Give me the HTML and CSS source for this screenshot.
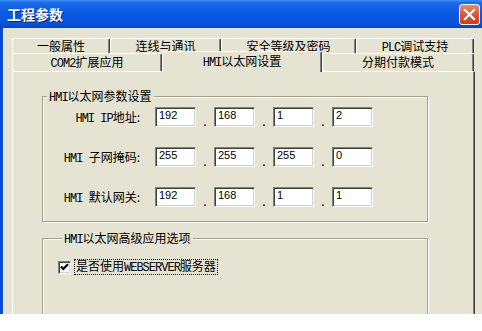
FILE: index.html
```html
<!DOCTYPE html>
<html lang="zh-CN">
<head>
  <meta charset="UTF-8">
  <title>工程参数</title>
  <link rel="stylesheet" href="styles.css">
</head>
<body>
  <div class="window">
    <div class="titlebar">
      <span class="title">工程参数</span>
      <span class="close">
        <svg width="19" height="19" viewBox="0 0 19 19"><path d="M5 5 L14 14 M14 5 L5 14" stroke="#fff" stroke-width="2.2" stroke-linecap="square"/></svg>
      </span>
    </div>
    <div class="frame">
      <div class="tabs">
        <div class="tabrow back">
          <div class="tab t1">一般属性</div>
          <div class="tab t2">连线与通讯</div>
          <div class="tab t3">安全等级及密码</div>
          <div class="tab t4"><span class="en">PLC</span>调试支持</div>
        </div>
        <div class="tabrow front">
          <div class="tab t5"><span class="en">COM2</span>扩展应用</div>
          <div class="tab t6 on"><span class="en">HMI</span>以太网设置</div>
          <div class="tab t7">分期付款模式</div>
        </div>
      </div>
      <div class="panel">
        <fieldset class="group net">
          <legend><span class="en">HMI</span>以太网参数设置</legend>
          <div class="row">
            <label class="lbl"><span class="en">HMI IP</span>地址:</label>
            <div class="ip">
              <input type="text" value="192"><span class="dot">.</span>
              <input type="text" value="168"><span class="dot">.</span>
              <input type="text" value="1"><span class="dot">.</span>
              <input type="text" value="2">
            </div>
          </div>
          <div class="row">
            <label class="lbl"><span class="en">HMI </span>子网掩码:</label>
            <div class="ip">
              <input type="text" value="255"><span class="dot">.</span>
              <input type="text" value="255"><span class="dot">.</span>
              <input type="text" value="255"><span class="dot">.</span>
              <input type="text" value="0">
            </div>
          </div>
          <div class="row">
            <label class="lbl"><span class="en">HMI </span>默认网关:</label>
            <div class="ip">
              <input type="text" value="192"><span class="dot">.</span>
              <input type="text" value="168"><span class="dot">.</span>
              <input type="text" value="1"><span class="dot">.</span>
              <input type="text" value="1">
            </div>
          </div>
        </fieldset>
        <fieldset class="group adv">
          <legend><span class="en">HMI</span>以太网高级应用选项</legend>
          <div class="check">
            <span class="box">
              <svg width="11" height="11" viewBox="0 0 11 11"><path d="M2 4.5 L4.3 7 L9 2.2" stroke="#000" stroke-width="2.2" fill="none"/></svg>
            </span>
            <span class="cap">是否使用<span class="en">WEBSERVER</span>服务器</span>
          </div>
        </fieldset>
      </div>
    </div>
  </div>
</body>
</html>
```

FILE: styles.css
```css
body {
  margin: 0;
  background: #fff;
  font-family: "Noto Sans CJK SC", sans-serif;
  font-size: 12px;
  color: #000;
}
.en {
  font-family: "Liberation Mono", monospace;
  letter-spacing: -1px;
  line-height: 1;
}
.window {
  width: 482px;
  height: 314px;
  overflow: hidden;
  background: #e5e4d3;
}
.titlebar {
  height: 28px;
  box-sizing: border-box;
  display: flex;
  align-items: center;
  justify-content: space-between;
  padding: 0 2px 0 7px;
  background: linear-gradient(#3d8ef6 0, #1a68ea 3px, #0a5ae4 45%, #0852dc 85%, #0744c6 100%);
}
.title {
  color: #fff;
  font-weight: bold;
  font-size: 14px;
  line-height: 16px;
  text-shadow: 1px 1px #0a2a8a;
}
.close {
  width: 21px;
  height: 21px;
  box-sizing: border-box;
  border: 1px solid #fff;
  border-radius: 3px;
  background: linear-gradient(#ec8a6a, #da5330 55%, #c8401e);
  display: flex;
}
.frame {
  height: 286px;
  box-sizing: border-box;
  border-left: 3px solid #0b4bd8;
  box-shadow: inset 1px 0 #f5f4ec;
  padding: 10px 0 0 9px;
}
.tabs {
  width: 463px;
}
.tabrow {
  display: flex;
}
.tabrow.back {
  height: 15px;
}
.tabrow.front {
  height: 18px;
}
.tab {
  box-sizing: border-box;
  text-align: center;
  white-space: nowrap;
  border-top: 1px solid #fff;
  border-left: 1px solid #fff;
  border-right: 1px solid #404040;
  box-shadow: inset -1px 0 #808080;
  border-radius: 2px 2px 0 0;
  background: #e5e4d3;
}
.back .tab {
  height: 15px;
  line-height: 13px;
}
.front .tab {
  height: 18px;
  line-height: 16px;
}
.t1 { width: 98px; }
.t2 { width: 111px; }
.t3 { width: 135px; }
.t4 { width: 118px; }
.t5 { width: 150px; }
.t6 { width: 160px; }
.t7 { width: 152px; }
.front .tab.on {
  height: 21px;
  margin-top: -2px;
  line-height: 18px;
  position: relative;
  z-index: 1;
}
.panel {
  width: 463px;
  height: 250px;
  box-sizing: border-box;
  border-top: 1px solid #fff;
  border-left: 1px solid #fff;
  border-right: 1px solid #404040;
  box-shadow: inset -1px 0 #808080;
  padding: 17px 0 0 29px;
}
.group {
  margin: 0;
  width: 386px;
  box-sizing: border-box;
  border: 1px solid #a09f8c;
  box-shadow: 1px 1px 0 #fff, inset 1px 1px 0 #fff;
}
.group legend {
  margin-left: 4px;
  padding: 0 2px;
  line-height: 14px;
  background: #e5e4d3;
}
.net {
  padding: 3px 0 14px 0;
}
.row {
  display: flex;
  align-items: center;
  height: 20px;
}
.row + .row {
  margin-top: 20px;
}
.lbl {
  width: 97px;
  margin-right: 15px;
  text-align: right;
  line-height: 14px;
}
.ip {
  display: flex;
}
.ip input {
  width: 41px;
  height: 20px;
  margin: 0;
  box-sizing: border-box;
  padding: 0 0 4px 3px;
  font: 11px "Liberation Sans", sans-serif;
  color: #000;
  background: #fff;
  border: 1px solid;
  border-color: #808080 #fff #fff #808080;
  box-shadow: inset 1px 1px #404040, inset -1px -1px #d4d0c8;
  outline: none;
}
.dot {
  width: 18px;
  height: 20px;
  line-height: 12px;
  display: flex;
  align-items: flex-end;
  justify-content: center;
}
.adv {
  margin-top: 9px;
  height: 100px;
  padding: 13px 0 0 15px;
}
.check {
  display: flex;
  align-items: center;
}
.box {
  width: 13px;
  height: 13px;
  box-sizing: border-box;
  margin-right: 3px;
  background: #fff;
  border: 1px solid;
  border-color: #808080 #fff #fff #808080;
  box-shadow: inset 1px 1px #404040, inset -1px -1px #d4d0c8;
  display: flex;
}
.cap {
  border: 1px dotted #000;
  padding: 0 1px;
  line-height: 12px;
}
```
